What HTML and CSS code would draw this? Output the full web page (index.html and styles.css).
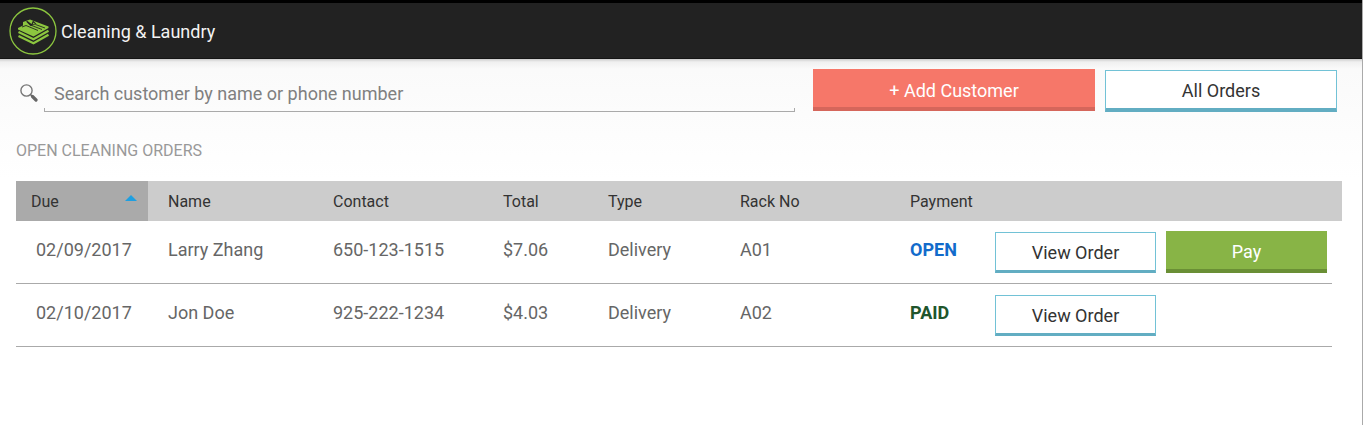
FILE: index.html
```html
<!DOCTYPE html>
<html lang="en">
<head>
<meta charset="UTF-8">
<meta name="viewport" content="width=device-width, initial-scale=1.0">
<title>Cleaning &amp; Laundry</title>
<link rel="stylesheet" href="styles.css">
</head>
<body>

<header class="header">
    <svg class="logo" viewBox="0 0 48 48" aria-hidden="true">
        <circle cx="24" cy="24" r="23" fill="none" stroke="#8cc63f" stroke-width="1.3"/>
        <!-- folded clothes -->
        <path fill="#8cc63f" d="M9 21 L14 18.500 L14 15 L21 12.500 L39.500 19.500 L39.500 21 L24.500 29.500 L9 22.500 Z"/>
        <path fill="none" stroke="#8cc63f" stroke-width="2.200" d="M9.500 25 L24.500 32.300 L39.500 23.800 M9.500 29 L24.500 36.300 L39.500 27.800"/>
        <path fill="none" stroke="#222" stroke-width="0.900" d="M13 20 L17 18.500 L29 23.500 M21.500 18 L33 22.500 M26.500 17.500 L36 21"/>
        <path fill="#222" d="M17 14.500 L18.500 14 L22.500 17 L24 13.500 L27.500 17 L21.500 19 Z"/>
        <path fill="#8cc63f" d="M23.500 17.500 L24.500 15.500 L26 17 Z"/>
    </svg>
    <h1 class="title">Cleaning &amp; Laundry</h1>
</header>

<main class="content">
    <div class="toolbar">
        <div class="search">
            <svg class="search-icon" viewBox="0 0 18 18" aria-hidden="true">
                <circle cx="6.500" cy="6.500" r="5.600" fill="none" stroke="#777" stroke-width="1.400"/>
                <path d="M10.500 10.500 L13 13" stroke="#666" stroke-width="1.500"/>
                <path d="M12.500 12.500 L16 16" stroke="#666" stroke-width="3.200" stroke-linecap="round"/>
            </svg>
            <div class="search-field">
                <input type="text" class="search-input" aria-label="Search customer" placeholder="Search customer by name or phone number">
            </div>
        </div>
        <button type="button" class="btn btn-add">+ Add Customer</button>
        <button type="button" class="btn btn-outline btn-all">All Orders</button>
    </div>

    <h2 class="subtitle">OPEN CLEANING ORDERS</h2>

    <table class="orders">
        <colgroup>
            <col class="col-due">
            <col class="col-name">
            <col class="col-contact">
            <col class="col-total">
            <col class="col-type">
            <col class="col-rack">
            <col class="col-payment">
            <col class="col-actions">
            <col class="col-end">
        </colgroup>
        <thead>
            <tr>
                <th class="sorted" aria-sort="ascending"><span class="sort-label">Due <span class="sort-arrow"></span></span></th>
                <th>Name</th>
                <th>Contact</th>
                <th>Total</th>
                <th>Type</th>
                <th>Rack No</th>
                <th>Payment</th>
                <td></td>
                <td></td>
            </tr>
        </thead>
        <tbody>
            <tr>
                <td>02/09/2017</td>
                <td>Larry Zhang</td>
                <td>650-123-1515</td>
                <td>$7.06</td>
                <td>Delivery</td>
                <td>A01</td>
                <td class="status open">OPEN</td>
                <td class="actions">
                    <div class="action-list">
                        <button type="button" class="btn btn-outline">View Order</button>
                        <button type="button" class="btn btn-pay">Pay</button>
                    </div>
                </td>
                <td class="end"></td>
            </tr>
            <tr>
                <td>02/10/2017</td>
                <td>Jon Doe</td>
                <td>925-222-1234</td>
                <td>$4.03</td>
                <td>Delivery</td>
                <td>A02</td>
                <td class="status paid">PAID</td>
                <td class="actions">
                    <div class="action-list">
                        <button type="button" class="btn btn-outline">View Order</button>
                    </div>
                </td>
                <td class="end"></td>
            </tr>
        </tbody>
    </table>
</main>

</body>
</html>
```
FILE: styles.css
```css
* {
    box-sizing: border-box;
}
body {
    font-family: Roboto, Arial, sans-serif;
    font-size: 18px;
    margin: 0;
    min-height: 100vh;
    color: #666;
    background-color: #fff;
    border-right: 1px solid #aaa;
}

/* Header */
.header {
    display: flex;
    align-items: center;
    gap: 4px;
    height: 59px;
    padding: 0 9px;
    background-color: #222;
    border-top: 3px solid #000;
    border-bottom: 1px solid #151515;
}
.logo {
    width: 48px;
    height: 48px;
}
.title {
    margin: 0;
    padding-top: 2px;
    font-size: 18px;
    font-weight: 400;
    color: #f3f3f3;
}

/* Content */
.content {
    padding: 10px 20px 20px 16px;
    background: linear-gradient(#ccc, #f0f0f0 3px, #fafafa 10px, #fff 120px);
}
.toolbar {
    display: flex;
    align-items: flex-end;
    gap: 10px;
    height: 43px;
    padding-right: 5px;
}
.search {
    display: flex;
    flex: 1;
    align-items: center;
    gap: 6px;
    margin-right: 8px;
    padding-left: 4px;
}
.search-icon {
    width: 18px;
    height: 18px;
}
.search-field {
    flex: 1;
    border-bottom: 1px solid #aaa;
    /* short ticks at both ends of the line */
    background: linear-gradient(#aaa, #aaa) left bottom / 1px 3px no-repeat,
                linear-gradient(#aaa, #aaa) right bottom / 1px 3px no-repeat;
}
.search-input {
    display: block;
    width: 100%;
    height: 38px;
    padding: 2px 10px 0;
    border: none;
    outline: none;
    background: transparent;
    font: inherit;
    color: #333;
}
.search-input::placeholder {
    color: #808080;
    opacity: 1;
}
.subtitle {
    margin: 28px 0 20px;
    font-size: 16px;
    line-height: 21px;
    font-weight: 400;
    color: #999;
}

/* Buttons */
.btn {
    width: 161px;
    height: 42px;
    padding: 4px 0 0;
    border: none;
    font: inherit;
    cursor: pointer;
}
.btn-outline {
    height: 41px;
    padding-top: 2px;
    color: #333;
    background-color: #fff;
    border: 1px solid #72c2d6;
    border-bottom: 3px solid #62adc2;
}
.btn-add {
    align-self: flex-start;
    width: 282px;
    color: #fff;
    background-color: #f67769;
    border-bottom: 4px solid #d5665b;
}
.btn-all {
    width: 232px;
    height: 42px;
    border-bottom-width: 4px;
}
.btn-pay {
    color: #fff;
    background-color: #88b446;
    border-bottom: 4px solid #6a8f35;
}

/* Orders table */
.orders {
    width: 100%;
    table-layout: fixed;
    border-collapse: separate;
    border-spacing: 0;
}
.col-due,
.col-type {
    width: 132px;
}
.col-name {
    width: 165px;
}
.col-contact {
    width: 170px;
}
.col-total,
.col-payment {
    width: 105px;
}
.col-actions {
    width: 337px;
}
.col-end {
    width: 10px;
}
.orders thead tr {
    height: 40px;
    background-color: #ccc;
}
.orders th {
    padding: 0 0 0 20px;
    font-size: 16px;
    font-weight: 400;
    text-align: left;
    color: #333;
}
.orders .sorted {
    padding: 0 11px 0 15px;
    background-color: #aaa;
}
.sort-label {
    display: flex;
    justify-content: space-between;
}
.sort-arrow {
    width: 0;
    height: 0;
    margin-top: 3px;
    border: 6px solid transparent;
    border-top: none;
    border-bottom: 6px solid #1f9fe0;
}
.orders tbody td {
    height: 63px;
    padding: 16px 0 0 20px;
    line-height: 26px;
    vertical-align: top;
    border-bottom: 1px solid #aaa;
}
.orders tbody .status {
    font-weight: 700;
}
.open {
    color: #126bcb;
}
.paid {
    color: #20552c;
}
.orders tbody .actions {
    padding: 10px 0;
}
.action-list {
    display: flex;
    align-items: flex-end;
    gap: 10px;
    height: 42px;
}
.orders tbody .end {
    padding: 0;
    border-bottom: none;
}
```
